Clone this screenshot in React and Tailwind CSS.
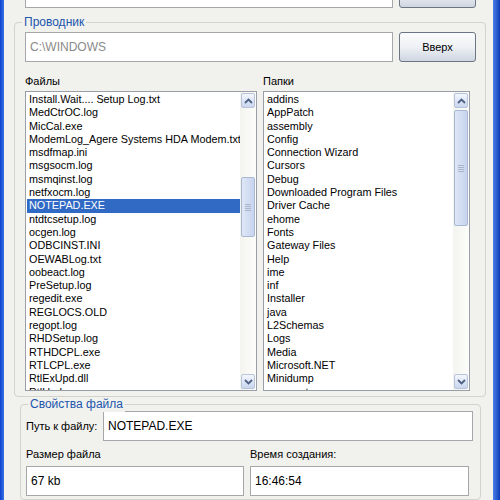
import React from "react";

const files = [
  "Install.Wait.... Setup Log.txt",
  "MedCtrOC.log",
  "MicCal.exe",
  "ModemLog_Agere Systems HDA Modem.txt",
  "msdfmap.ini",
  "msgsocm.log",
  "msmqinst.log",
  "netfxocm.log",
  "NOTEPAD.EXE",
  "ntdtcsetup.log",
  "ocgen.log",
  "ODBCINST.INI",
  "OEWABLog.txt",
  "oobeact.log",
  "PreSetup.log",
  "regedit.exe",
  "REGLOCS.OLD",
  "regopt.log",
  "RHDSetup.log",
  "RTHDCPL.exe",
  "RTLCPL.exe",
  "RtlExUpd.dll",
  "RtlUpd.exe",
];

const folders = [
  "addins",
  "AppPatch",
  "assembly",
  "Config",
  "Connection Wizard",
  "Cursors",
  "Debug",
  "Downloaded Program Files",
  "Driver Cache",
  "ehome",
  "Fonts",
  "Gateway Files",
  "Help",
  "ime",
  "inf",
  "Installer",
  "java",
  "L2Schemas",
  "Logs",
  "Media",
  "Microsoft.NET",
  "Minidump",
  "msagent",
];

// little chevron for the scroll buttons
const Chevron = ({ down }) => (
  <svg width="9" height="6" viewBox="0 0 9 6">
    <polyline
      points={down ? "1,1 4.5,4.5 8,1" : "1,5 4.5,1.5 8,5"}
      fill="none"
      stroke="#4d6185"
      strokeWidth="1.8"
    />
  </svg>
);

const ScrollButton = ({ down }) => (
  <div className="h-[15px] mx-[1px] flex items-center justify-center rounded-[2px] border border-[#b7c3d9] bg-gradient-to-b from-[#f4f7fd] to-[#c9d6ef]">
    <Chevron down={down} />
  </div>
);

const Thumb = ({ top, height }) => (
  <div
    className="mx-[1px] rounded-[2px] border border-[#a9b7d0] bg-gradient-to-r from-[#dfe7f7] to-[#c7d4ee] flex items-center justify-center"
    style={{ marginTop: top, height }}
  >
    <div className="w-[6px] flex flex-col gap-[1px]">
      <div className="h-[1px] bg-[#a9b5cc]" />
      <div className="h-[1px] bg-[#a9b5cc]" />
      <div className="h-[1px] bg-[#a9b5cc]" />
      <div className="h-[1px] bg-[#a9b5cc]" />
    </div>
  </div>
);

const ListBox = ({ items, selected, width, thumbTop, thumbHeight }) => (
  <div
    className="h-[300px] border border-[#9a9ea6] bg-white flex"
    style={{ width }}
  >
    <div className="flex-1 overflow-hidden pt-[1px] pl-[1px]">
      {items.map((it) => (
        <div
          key={it}
          className={
            "h-[13.3px] leading-[13.3px] pl-[2px] text-[10.8px] whitespace-nowrap " +
            (it === selected ? "bg-[#316ac5] text-white" : "text-black")
          }
        >
          {it}
        </div>
      ))}
    </div>
    <div className="w-[16px] bg-gradient-to-r from-[#f3f3ef] to-[#fdfdfb] flex flex-col py-[1px]">
      <ScrollButton />
      <div className="flex-1">
        <Thumb top={thumbTop} height={thumbHeight} />
      </div>
      <ScrollButton down />
    </div>
  </div>
);

const TextBox = ({ value, width, muted }) => (
  <div
    className={
      "h-[30px] border border-[#a5a7ab] bg-white flex items-center pl-[4px] text-[12px] " +
      (muted ? "text-[#8a8a8a]" : "text-black")
    }
    style={{ width }}
  >
    {value}
  </div>
);

const Button = ({ label }) => (
  <div className="w-[77px] h-[30px] rounded-[3px] border border-[#6c7584] bg-gradient-to-b from-[#fbfcfd] via-[#eef1f5] to-[#cfd6e1] flex items-center justify-center text-[11px] text-black">
    {label}
  </div>
);

export default function App() {
  return (
    <div
      className="w-[500px] h-[500px] overflow-hidden flex"
      style={{ fontFamily: '"Liberation Sans", Arial, sans-serif' }}
    >
      <div className="w-[4px] bg-gradient-to-r from-[#0b3fd0] to-[#3b73e4]" />

      <div className="flex-1 bg-[#f1f1ed] flex flex-col">
        {/* cut-off row at the very top */}
        <div className="flex mt-[-22px] pl-[21px] gap-[6px]">
          <TextBox value="" width={368} />
          <Button label="" />
        </div>

        {/* Проводник */}
        <div className="relative mt-[14px] ml-[10px] w-[472px] border border-[#d3d3cc] rounded-[4px] pl-[10px] pt-[9px] pb-[5px]">
          <span className="absolute top-[-8px] left-[7px] px-[2px] bg-[#f1f1ed] text-[12px] leading-[15px] text-[#2156ad]">
            Проводник
          </span>
          <div className="flex gap-[6px]">
            <TextBox value="C:\WINDOWS" width={368} muted />
            <Button label="Вверх" />
          </div>
          <div className="flex mt-[13px] text-[11px] leading-[13px] text-black">
            <div className="w-[238px]">Файлы</div>
            <div>Папки</div>
          </div>
          <div className="flex gap-[6px] mt-[3px]">
            <ListBox
              items={files}
              selected="NOTEPAD.EXE"
              width={232}
              thumbTop={69}
              thumbHeight={60}
            />
            <ListBox
              items={folders}
              width={207}
              thumbTop={2}
              thumbHeight={116}
            />
          </div>
        </div>

        {/* Свойства файла */}
        <div className="relative mt-[7px] ml-[16px] w-[461px] border border-[#d3d3cc] rounded-[4px] pl-[5px] pt-[6px] h-[120px]">
          <span className="absolute top-[-8px] left-[7px] px-[2px] bg-[#f1f1ed] text-[12px] leading-[15px] text-[#2156ad]">
            Свойства файла
          </span>
          <div className="flex items-center">
            <div className="w-[77px] text-[11px] text-black">Путь к файлу:</div>
            <TextBox value="NOTEPAD.EXE" width={370} />
          </div>
          <div className="flex gap-[6px] mt-[7px]">
            <div className="flex flex-col gap-[5px]">
              <div className="text-[11px] leading-[13px] text-black">Размер файла</div>
              <TextBox value="67 kb" width={218} />
            </div>
            <div className="flex flex-col gap-[5px]">
              <div className="text-[11px] leading-[13px] text-black">Время создания:</div>
              <TextBox value="16:46:54" width={219} />
            </div>
          </div>
        </div>
      </div>

      <div className="w-[7px] bg-gradient-to-r from-[#4a80e8] to-[#0c3bb5]" />
    </div>
  );
}
